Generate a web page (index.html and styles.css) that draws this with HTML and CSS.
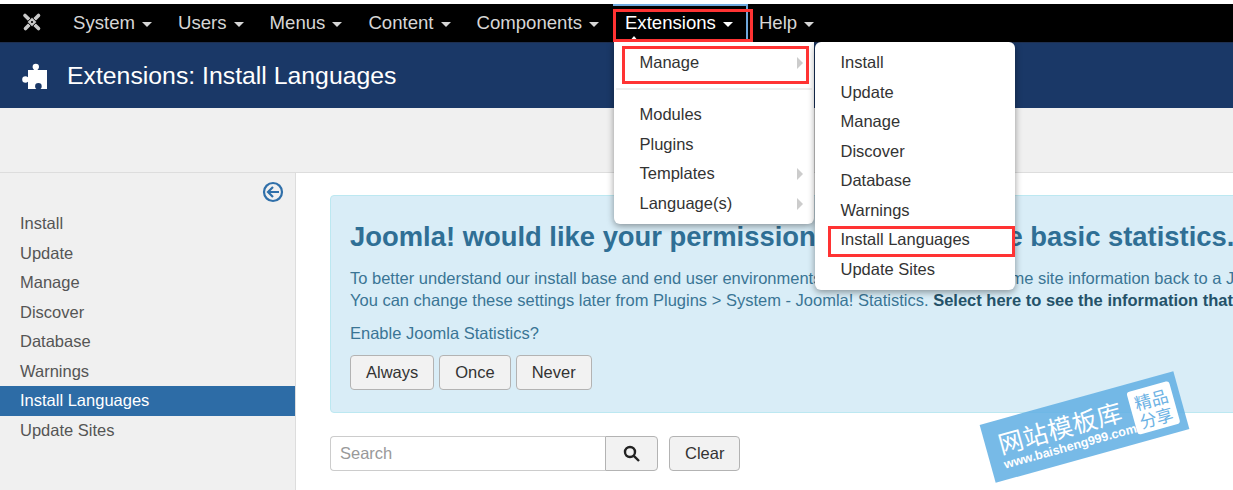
FILE: index.html
```html
<!DOCTYPE html>
<html lang="en">
<head>
<meta charset="utf-8">
<title>Extensions: Install Languages</title>
<link rel="stylesheet" href="styles.css">
</head>
<body>
<nav class="navbar">
  <svg class="logo" viewBox="0 0 20 20"><path class="logo-x" d="M3 3.5 L16.5 16.5 M16.5 3.5 L3.5 16.5"/><path class="logo-ring" d="M10 5.2 L14.8 10 L10 14.8 L5.2 10 Z"/><circle class="logo-hole" cx="10" cy="10" r="1.1"/></svg>
  <ul class="nav">
    <li class="nav-item">System<span class="caret"></span></li>
    <li class="nav-item">Users<span class="caret"></span></li>
    <li class="nav-item">Menus<span class="caret"></span></li>
    <li class="nav-item">Content<span class="caret"></span></li>
    <li class="nav-item">Components<span class="caret"></span></li>
    <li class="nav-item active">Extensions<span class="caret"></span></li>
    <li class="nav-item">Help<span class="caret"></span></li>
  </ul>
</nav>
<header class="page-title">
  <svg class="puzzle" viewBox="0 0 26 26"><path d="M6 7h6.2c-1-.9-1.6-1.8-1.6-3a3.2 3.2 0 0 1 6.4 0c0 1.200-.6 2.100-1.600 3H25v19h-6.500c.8-.8 1.200-1.600 1.200-2.600a3.300 3.300 0 0 0-6.600 0c0 1 .4 1.800 1.200 2.600H6v-7.200c-.8.700-1.600 1-2.500 1a3.300 3.300 0 0 1 0-6.600c.9 0 1.700.3 2.500 1z"/></svg>
  <h1 class="title">Extensions: Install Languages</h1>
</header>
<div class="toolbar"></div>
<div class="main">
  <aside class="sidebar">
    <div class="toggle">
      <svg class="toggle-icon" viewBox="0 0 22 22"><circle cx="11" cy="11" r="9"/><path d="M17 11H6.500M11 6l-5 5 5 5"/></svg>
    </div>
    <ul class="side-list">
      <li class="side-item">Install</li>
      <li class="side-item">Update</li>
      <li class="side-item">Manage</li>
      <li class="side-item">Discover</li>
      <li class="side-item">Database</li>
      <li class="side-item">Warnings</li>
      <li class="side-item current">Install Languages</li>
      <li class="side-item">Update Sites</li>
    </ul>
  </aside>
  <section class="content">
    <div class="alert">
      <h2 class="alert-title">Joomla! would like your permission to collect some basic statistics.</h2>
      <p class="alert-text">To better understand our install base and end user environments it is helpful if you send some site information back to a Joomla! sponsored server.<br>You can change these settings later from Plugins &gt; System - Joomla! Statistics. <b class="alert-link">Select here to see the information that will be sent.</b></p>
      <p class="alert-question">Enable Joomla Statistics?</p>
      <div class="btn-row">
        <button class="btn">Always</button>
        <button class="btn">Once</button>
        <button class="btn">Never</button>
      </div>
    </div>
    <div class="filter">
      <div class="search-group">
        <input class="search-input" type="text" placeholder="Search">
        <button class="btn search-btn" aria-label="Search"><svg class="search-icon" viewBox="0 0 18 18"><circle cx="7" cy="7" r="5"/><path d="M10.800 10.800L16 16"/></svg></button>
      </div>
      <button class="btn clear-btn">Clear</button>
    </div>
  </section>
</div>

<ul class="menu menu-ext">
  <li class="menu-item has-sub">Manage</li>
  <li class="divider"></li>
  <li class="menu-item">Modules</li>
  <li class="menu-item">Plugins</li>
  <li class="menu-item has-sub">Templates</li>
  <li class="menu-item has-sub">Language(s)</li>
</ul>
<ul class="menu menu-sub">
  <li class="menu-item">Install</li>
  <li class="menu-item">Update</li>
  <li class="menu-item">Manage</li>
  <li class="menu-item">Discover</li>
  <li class="menu-item">Database</li>
  <li class="menu-item">Warnings</li>
  <li class="menu-item">Install Languages</li>
  <li class="menu-item">Update Sites</li>
</ul>

<div class="focus-outline"></div>
<span class="menu-pointer"></span>
<div class="mark mark-ext"></div>
<div class="mark mark-manage"></div>
<div class="mark mark-install"></div>

<div class="watermark">
  <div class="wm-text">
    <div class="wm-name">网站模板库</div>
    <div class="wm-url">www.baisheng999.com</div>
  </div>
  <div class="wm-badge">精品<br>分享</div>
</div>
</body>
</html>
```
FILE: styles.css
```css
* { box-sizing: border-box; }
html, body { margin: 0; height: 490px; overflow: hidden; }
body {
  padding-top: 4px;
  background: #fff;
  font-family: "Liberation Sans", Arial, sans-serif;
  font-size: 16.5px;
  color: #333;
  display: flex;
  flex-direction: column;
}
ul { list-style: none; margin: 0; padding: 0; }

/* top bar */
.navbar {
  height: 39px;
  flex: none;
  background: #000;
  border-bottom: 1px solid #1e2f4f;
  display: flex;
  align-items: center;
  padding-left: 22px;
}
.logo { width: 20px; height: 20px; flex: none; margin-top: -2px; }
.logo-x { fill: none; stroke: #c9c9c9; stroke-width: 3.600; stroke-linecap: round; }
.logo-ring { fill: #c9c9c9; stroke: #000; stroke-width: 1; }
.logo-hole { fill: #000; }
.nav { display: flex; margin-left: 18px; }
.nav-item {
  font-size: 18.6px;
  line-height: 38px;
  color: #d6d6d6;
  padding: 0 13px;
  white-space: nowrap;
  display: flex;
  align-items: center;
}
.nav-item.active { color: #fff; }
.caret {
  width: 0;
  height: 0;
  margin-left: 7px;
  margin-top: 2px;
  border-left: 5px solid transparent;
  border-right: 5px solid transparent;
  border-top: 5px solid currentColor;
}

/* title band */
.page-title {
  height: 65px;
  flex: none;
  background: #1a3867;
  display: flex;
  align-items: center;
  padding-left: 22px;
}
.puzzle { width: 26px; height: 26px; fill: #fff; flex: none; }
.title {
  margin: 0 0 0 19px;
  font-size: 24.800px;
  font-weight: 400;
  color: #fff;
  white-space: nowrap;
}

.toolbar {
  height: 65px;
  flex: none;
  background: #f0f0f0;
  border-bottom: 1px solid #ddd;
}

/* main */
.main { flex: 1; display: flex; min-height: 0; }
.sidebar {
  width: 296px;
  flex: none;
  background: #f0f0f0;
  border-right: 1px solid #ddd;
}
.toggle {
  display: flex;
  justify-content: flex-end;
  padding: 8px 11px 6px 0;
}
.toggle-icon { width: 22px; height: 22px; fill: none; stroke: #2f6fa9; stroke-width: 2.200; }
.side-item {
  height: 29.500px;
  line-height: 29.500px;
  padding-left: 20px;
  color: #555;
}
.side-item.current { background: #2d6ca6; color: #fff; }

.content {
  flex: 1;
  min-width: 0;
  padding: 22px 0 0 34px;
  overflow: hidden;
}
.alert {
  width: 1100px;
  height: 218px;
  background: #d9edf7;
  border: 1px solid #bce8f1;
  border-radius: 4px;
  padding: 0 0 0 19px;
  color: #3a7595;
  white-space: nowrap;
}
.alert-title {
  margin: 21px 0 0;
  font-size: 27.400px;
  line-height: 40px;
  font-weight: 700;
  color: #2f6f95;
}
.alert-text { margin: 10px 0 0; line-height: 22px; }
.alert-link { color: #245269; }
.alert-question { margin: 11px 0 0; line-height: 22px; }
.btn-row { display: flex; gap: 5px; margin-top: 11px; }
.btn {
  height: 35px;
  padding: 0 15px;
  background: #f2f2f2;
  border: 1px solid #b3b3b3;
  border-radius: 4px;
  font: inherit;
  color: #333;
}
.filter { display: flex; margin-top: 23px; gap: 11px; }
.search-group { display: flex; }
.search-input {
  width: 275px;
  height: 35px;
  padding: 0 9px;
  border: 1px solid #ccc;
  border-right: 0;
  border-radius: 4px 0 0 4px;
  font: inherit;
  color: #333;
  background: #fff;
}
.search-input::placeholder { color: #999; opacity: 1; }
.search-btn {
  width: 53px;
  padding: 0;
  border-radius: 0 4px 4px 0;
  display: flex;
  align-items: center;
  justify-content: center;
}
.search-icon { width: 18px; height: 18px; fill: none; stroke: #222; stroke-width: 2.400; }

/* open dropdowns */
.menu {
  position: absolute;
  top: 42px;
  width: 200px;
  padding: 6px 0;
  background: #fff;
  border-radius: 6px;
  box-shadow: 0 2px 7px rgba(0, 0, 0, .4);
}
.menu-ext { left: 614px; border-radius: 0 0 6px 6px; }
.menu-sub { left: 815px; }
.menu-item {
  position: relative;
  height: 29.500px;
  line-height: 29.500px;
  padding-left: 25.500px;
  color: #333;
  white-space: nowrap;
}
.has-sub::after {
  content: "";
  position: absolute;
  right: 11px;
  top: 9px;
  border-top: 6px solid transparent;
  border-bottom: 6px solid transparent;
  border-left: 6px solid #ccc;
}
.divider { height: 2px; margin: 10.500px 2px 10px; background: #eee; }

/* annotations over the screenshot */
.focus-outline {
  position: absolute;
  left: 613px;
  top: 4px;
  width: 135px;
  height: 38px;
  border: 2px solid #6fa8dc;
  border-bottom: 0;
  border-left: 0;
}
.menu-pointer {
  position: absolute;
  left: 629px;
  top: 36px;
  border-left: 5px solid transparent;
  border-right: 5px solid transparent;
  border-bottom: 6px solid #fff;
}
.mark { position: absolute; border: 3px solid #ff3333; }
.mark-ext { left: 613px; top: 9px; width: 140px; height: 33px; }
.mark-manage { left: 622px; top: 46px; width: 187px; height: 38px; }
.mark-install { left: 828px; top: 226px; width: 187px; height: 31px; }

/* watermark */
.watermark {
  position: absolute;
  left: 984px;
  top: 397px;
  width: 201px;
  height: 60px;
  transform: rotate(-15.500deg);
  background: rgba(100, 176, 228, .88);
  display: flex;
  align-items: center;
  justify-content: space-between;
  padding: 0 12px 0 13px;
  color: #fff;
}
.wm-name {
  font-family: "Noto Sans CJK SC", sans-serif;
  font-size: 25px;
  line-height: 30px;
  letter-spacing: .5px;
  white-space: nowrap;
}
.wm-url {
  font-family: "Liberation Sans", sans-serif;
  font-size: 12.500px;
  font-weight: 700;
  line-height: 15px;
  white-space: nowrap;
}
.wm-badge {
  width: 44px;
  height: 44px;
  flex: none;
  background: #fff;
  border-radius: 3px;
  color: #6cb2e4;
  font-family: "Noto Sans CJK SC", sans-serif;
  font-size: 17px;
  line-height: 19px;
  text-align: center;
  padding-top: 3px;
}
```
